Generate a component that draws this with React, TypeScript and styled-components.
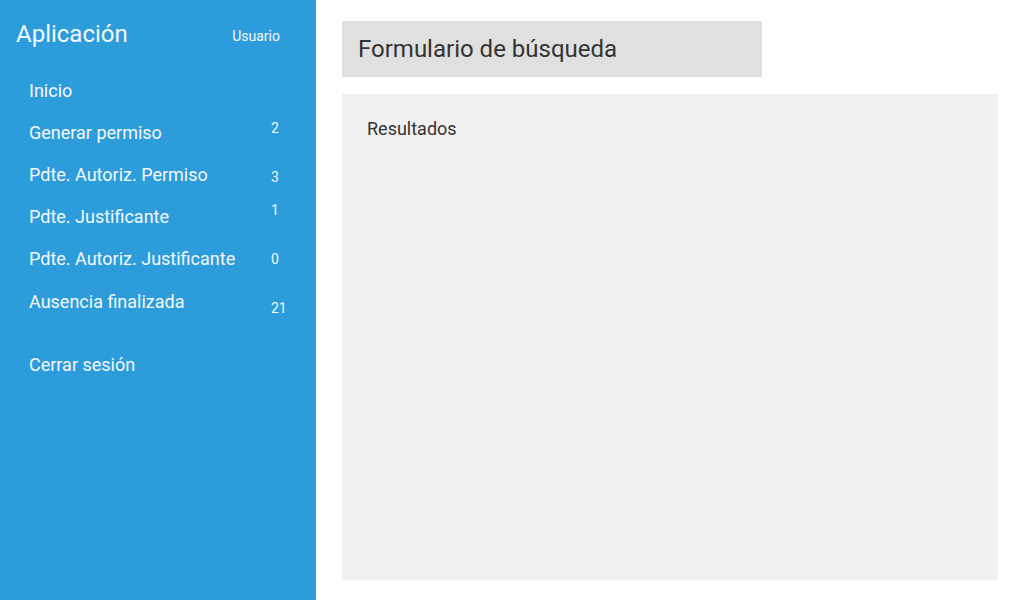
import React from "react";
import styled, { createGlobalStyle } from "styled-components";

const GlobalStyle = createGlobalStyle`
  html, body { margin: 0; padding: 0; }
  body { font-family: Roboto, "Noto Sans", sans-serif; background: #ffffff; }
  * { box-sizing: border-box; }
`;

const Layout = styled.div`
  display: flex;
  width: 1024px;
  height: 600px;
  overflow: hidden;
`;

const Sidebar = styled.aside`
  width: 316px;
  flex-shrink: 0;
  background: #2d9cdb;
  color: #f4f8fb;
  display: flex;
  flex-direction: column;
  padding: 19px 0 0 16px;
`;

const Brand = styled.div`
  display: flex;
  align-items: baseline;
  justify-content: space-between;
  width: 264px;
  height: 30px;
`;

const Title = styled.h1`
  margin: 0;
  font-size: 24px;
  font-weight: 400;
  line-height: 30px;
`;

const User = styled.span`
  font-size: 14px;
  transform: translateY(-1px);
`;

const Nav = styled.nav`
  display: flex;
  flex-direction: column;
  padding: 20px 0 0 13px;
`;

const NavItem = styled.a<{ $gapTop?: number }>`
  display: flex;
  align-items: center;
  width: 260px;
  height: 42px;
  margin-top: ${(p) => p.$gapTop ?? 0}px;
  font-size: 18px;
  color: inherit;
  text-decoration: none;
`;

const Label = styled.span`
  flex: 1;
`;

const Count = styled.span<{ $shift: number }>`
  font-size: 14px;
  width: 18px;
  transform: translateY(${(p) => p.$shift}px);
`;

const Main = styled.main`
  flex: 1;
  display: flex;
  flex-direction: column;
  gap: 17px;
  padding: 21px 26px 20px 26px;
`;

const SearchHeader = styled.div`
  width: 420px;
  height: 56px;
  background: #e0e0e0;
  display: flex;
  align-items: center;
  padding-left: 16px;
  font-size: 24px;
  color: #333333;
`;

const Results = styled.section`
  flex: 1;
  background: #f1f1f1;
  padding: 24px 25px;
  font-size: 18px;
  color: #333333;
`;

const items: { label: string; count?: number; shift?: number }[] = [
  { label: "Inicio" },
  { label: "Generar permiso", count: 2, shift: -4 },
  { label: "Pdte. Autoriz. Permiso", count: 3, shift: 3 },
  { label: "Pdte. Justificante", count: 1, shift: -6 },
  { label: "Pdte. Autoriz. Justificante", count: 0, shift: 1 },
  { label: "Ausencia finalizada", count: 21, shift: 7 },
];

export default function App() {
  return (
    <>
      <GlobalStyle />
      <Layout>
        <Sidebar>
          <Brand>
            <Title>Aplicación</Title>
            <User>Usuario</User>
          </Brand>
          <Nav>
            {items.map((it, i) => (
              <NavItem key={it.label} href="#" $gapTop={i === 5 ? 1 : 0}>
                <Label>{it.label}</Label>
                {it.count !== undefined && <Count $shift={it.shift ?? 0}>{it.count}</Count>}
              </NavItem>
            ))}
            <NavItem href="#" $gapTop={21}>
              <Label>Cerrar sesión</Label>
            </NavItem>
          </Nav>
        </Sidebar>
        <Main>
          <SearchHeader>Formulario de búsqueda</SearchHeader>
          <Results>Resultados</Results>
        </Main>
      </Layout>
    </>
  );
}
